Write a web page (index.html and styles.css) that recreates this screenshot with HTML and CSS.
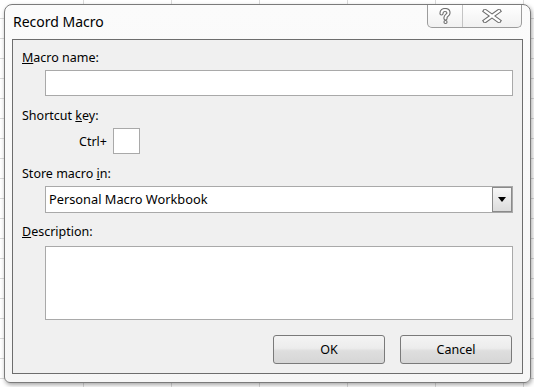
FILE: index.html
```html
<!DOCTYPE html>
<html>
  <head>
    <link rel="stylesheet" href="styles.css">
  </head>
  <body>
    <div class="dialog">
      <div class="titlebar">
        <span class="title">Record Macro</span>
        <div class="caption-buttons">
          <div class="cap help">
            <svg width="14" height="17" viewBox="0 0 14 17">
              <path d="M3.5 5.5 C3.5 3 5 2 7 2 C9.5 2 10.5 3.5 10.5 5 C10.5 7 7.5 7.5 7.5 9.5 L7.5 10.5" fill="none" stroke="#6e6e6e" stroke-width="4.2" stroke-linecap="round"/>
              <circle cx="7.5" cy="14" r="2.1" fill="#6e6e6e"/>
              <path d="M3.5 5.5 C3.5 3 5 2 7 2 C9.5 2 10.5 3.5 10.5 5 C10.5 7 7.5 7.5 7.5 9.5 L7.5 10.5" fill="none" stroke="#fff" stroke-width="2" stroke-linecap="round"/>
              <circle cx="7.5" cy="14" r="1" fill="#fff"/>
            </svg>
          </div>
          <div class="cap close">
            <svg width="20" height="14" viewBox="0 0 20 14">
              <path d="M3 2 L17 12 M17 2 L3 12" stroke="#6e6e6e" stroke-width="4.4" stroke-linecap="square"/>
              <path d="M3 2 L17 12 M17 2 L3 12" stroke="#fff" stroke-width="2.2" stroke-linecap="square"/>
            </svg>
          </div>
        </div>
      </div>

      <div class="client">
        <div class="label"><u>M</u>acro name:</div>
        <div class="field name-field"></div>

        <div class="label gap-top">Shortcut <u>k</u>ey:</div>
        <div class="shortcut-row">
          <span>Ctrl+</span>
          <div class="field key-field"></div>
        </div>

        <div class="label gap-top">Store macro <u>i</u>n:</div>
        <div class="combo">
          <span class="combo-text">Personal Macro Workbook</span>
          <div class="combo-button"><span class="arrow"></span></div>
        </div>

        <div class="label gap-desc"><u>D</u>escription:</div>
        <div class="field desc-field"></div>

        <div class="button-row">
          <div class="button">OK</div>
          <div class="button">Cancel</div>
        </div>
      </div>
    </div>
  </body>
</html>
```

FILE: styles.css
```css
body {
  margin: 0;
  width: 534px;
  height: 387px;
  overflow: hidden;
  font-family: "Noto Sans", "Open Sans", sans-serif;
  color: #000;
  background-color: #fff;
  background-image:
    linear-gradient(to right, #dadada 1px, transparent 1px),
    linear-gradient(to bottom, #dadada 1px, transparent 1px);
  background-size: 88px 100%, 100% 20px;
  background-position: 83px 0, 0 18px;
}

.dialog {
  margin: 4px 0 0 4px;
  width: 511px;
  padding: 0 7px 8px 7px;
  border: 1px solid #7b7b7b;
  border-radius: 8px 8px 6px 6px;
  background: linear-gradient(#fbfbfb, #f6f6f6);
  box-shadow: 1px 2px 4px rgba(0, 0, 0, 0.35);
}

.titlebar {
  height: 34px;
  display: flex;
  justify-content: space-between;
  align-items: flex-start;
}

.title {
  padding: 7px 0 0 1px;
  font-size: 14px;
  line-height: 20px;
}

.caption-buttons {
  display: flex;
  height: 22px;
  margin-right: 1px;
  border: 1px solid #9c9c9c;
  border-top: none;
  border-radius: 0 0 5px 5px;
  background: linear-gradient(#ffffff, #f1f1f1);
}

.cap {
  display: flex;
  align-items: center;
  justify-content: center;
}

.help {
  width: 34px;
  border-right: 1px solid #c4c4c4;
}

.close {
  width: 58px;
}

.client {
  border: 1px solid #6d6d6d;
  background-color: #f0f0f0;
  padding: 10px 9px 9px 9px;
  font-size: 12.5px;
}

.label {
  line-height: 16px;
}

.gap-top {
  margin-top: 12px;
}

.gap-desc {
  margin-top: 11px;
}

.field {
  background-color: #fff;
  border: 1px solid #a9a9a9;
  box-sizing: border-box;
}

.name-field {
  margin: 4px 0 0 23px;
  height: 26px;
}

.shortcut-row {
  display: flex;
  align-items: center;
  gap: 6px;
  margin: 4px 0 0 57px;
}

.key-field {
  width: 27px;
  height: 26px;
}

.combo {
  display: flex;
  align-items: stretch;
  margin: 4px 0 0 23px;
  height: 27px;
  box-sizing: border-box;
  background-color: #fff;
  border: 1px solid #a9a9a9;
}

.combo-text {
  flex: 1;
  padding-left: 3px;
  font-size: 12.8px;
  line-height: 25px;
}

.combo-button {
  width: 20px;
  box-sizing: border-box;
  border: 1px solid #8a8a8a;
  background: linear-gradient(#f7f7f7, #dcdcdc);
  display: flex;
  align-items: center;
  justify-content: center;
}

.arrow {
  width: 0;
  height: 0;
  border-left: 4px solid transparent;
  border-right: 4px solid transparent;
  border-top: 5px solid #000;
}

.desc-field {
  margin: 6px 0 0 23px;
  height: 74px;
}

.button-row {
  display: flex;
  justify-content: flex-end;
  gap: 15px;
  margin-top: 15px;
  padding-right: 1px;
}

.button {
  width: 112px;
  height: 29px;
  box-sizing: border-box;
  border: 1px solid #7a7a7a;
  border-radius: 3px;
  background: linear-gradient(#f4f4f4 0%, #ececec 45%, #dedede 55%, #d6d6d6 100%);
  text-align: center;
  line-height: 27px;
}
```
